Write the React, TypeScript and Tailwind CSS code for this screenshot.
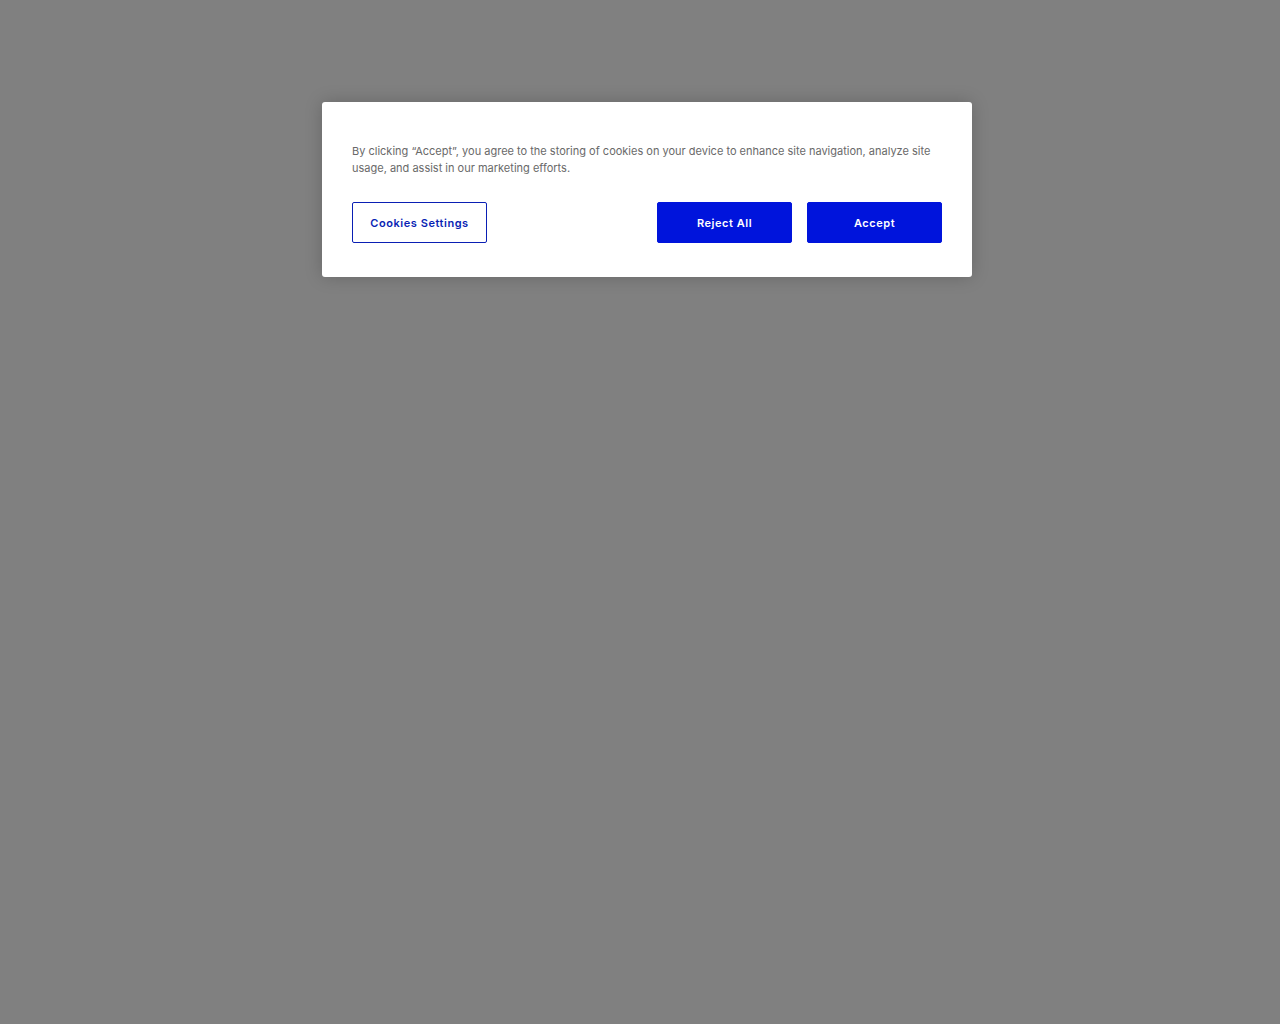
import { useState } from "react";

const buttonClass =
  "h-[41px] w-[135px] cursor-pointer rounded-xs border pt-0.5 text-[11px] font-semibold tracking-wider";

interface CookieBannerProps {
  onClose: () => void;
}

const CookieBanner: React.FC<CookieBannerProps> = ({ onClose }) => {
  return (
    <div
      role="dialog"
      aria-modal="true"
      aria-label="Cookie consent"
      className="w-full max-w-[650px] rounded-[3px] bg-white px-[30px] pt-[41px] pb-[34px] shadow-[0_0_18px_rgba(0,0,0,0.2)]"
    >
      <p className="text-[11px] leading-[17px] text-[#696969]">
        By clicking “Accept”, you agree to the storing of cookies on your device to enhance site
        navigation, analyze site usage, and assist in our marketing efforts.
      </p>
      <div className="mt-[25px] flex flex-wrap items-center justify-between gap-[15px]">
        <button type="button" className={`${buttonClass} border-[#0a1fb4] bg-white text-[#0a1fb4]`}>
          Cookies Settings
        </button>
        <div className="flex flex-wrap gap-[15px]">
          <button
            type="button"
            onClick={onClose}
            className={`${buttonClass} border-[#0014dc] bg-[#0014dc] text-white`}
          >
            Reject All
          </button>
          <button
            type="button"
            onClick={onClose}
            className={`${buttonClass} border-[#0014dc] bg-[#0014dc] text-white`}
          >
            Accept
          </button>
        </div>
      </div>
    </div>
  );
};

const App: React.FC = () => {
  const [open, setOpen] = useState(true);

  return (
    <div className="flex min-h-screen items-start justify-center bg-[#808080] pt-[102px] pr-4 pl-[30px] font-['Inter','Liberation_Sans',sans-serif]">
      {open && <CookieBanner onClose={() => setOpen(false)} />}
    </div>
  );
};

export default App;
